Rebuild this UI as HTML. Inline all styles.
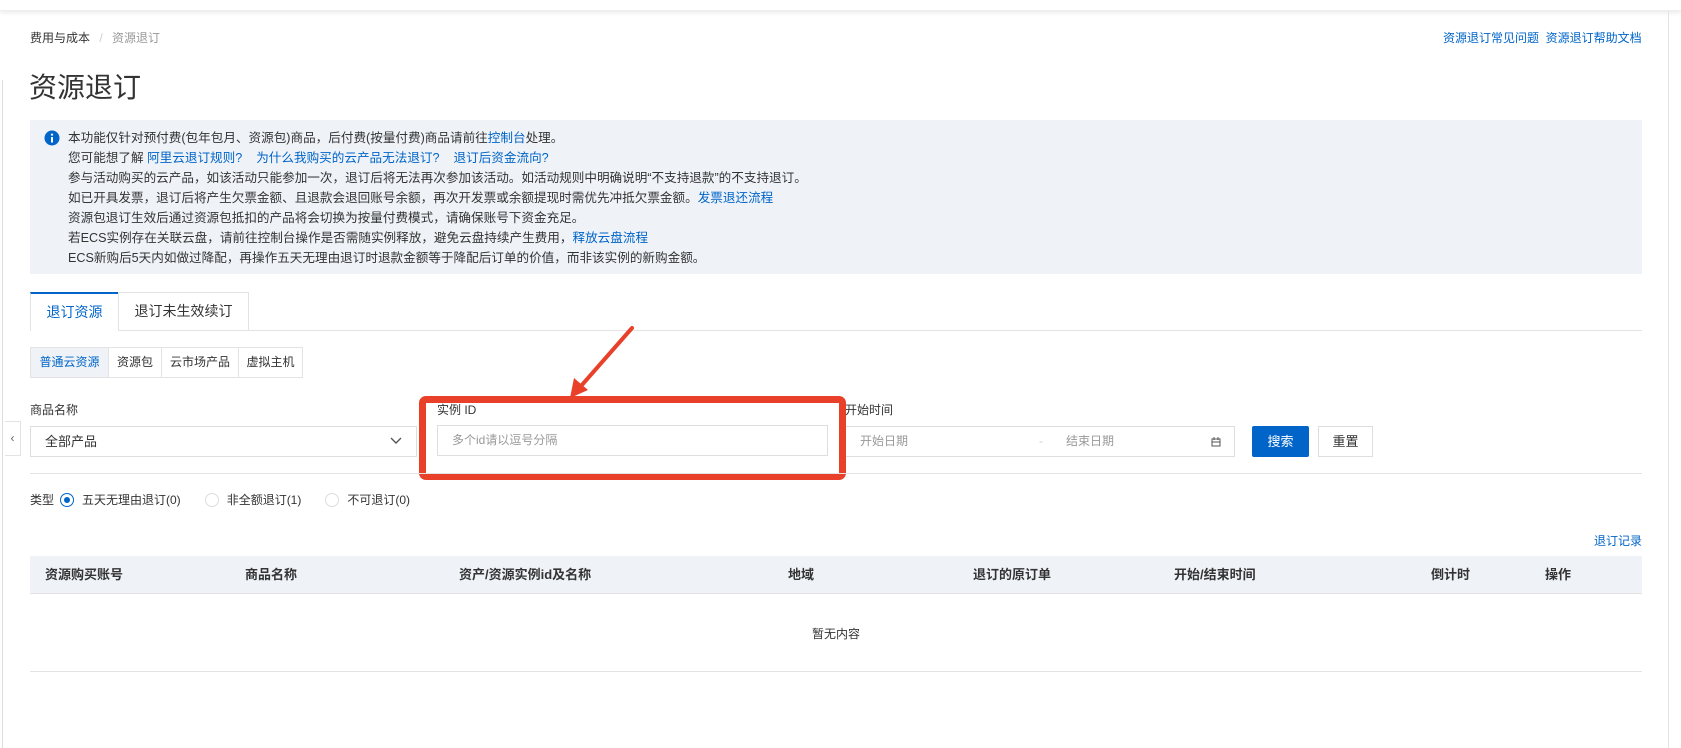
<!DOCTYPE html>
<html><head><meta charset="utf-8"><style>
*{box-sizing:border-box;margin:0;padding:0}
body{width:1681px;height:748px;overflow:hidden;background:#fff;font-family:"Liberation Sans","Noto Sans CJK SC",sans-serif;color:#333;font-size:13px;position:relative}
.a{position:absolute}
.blue{color:#0064c8}
.info div{height:20px;line-height:20px}
.inp{border:1px solid #dedede;background:#fff;height:31px;line-height:29px;padding-left:14px}
.th{position:absolute;top:0;line-height:38px;font-weight:bold;font-size:13px;color:#333}
</style></head><body>
<div class="a" style="left:0;top:0;width:1681px;height:11px;background:#fff;box-shadow:0 2px 4px rgba(0,0,0,.08);border-bottom:1px solid #eee"></div>
<div class="a" style="left:1668px;top:11px;width:1px;height:737px;background:#e3e3e3"></div>
<div class="a" style="left:2px;top:80px;width:1px;height:668px;background:#ddd"></div>
<div class="a" style="left:30px;top:29px;font-size:12px;color:#333">费用与成本 <span style="color:#ccc;margin:0 6px">/</span> <span style="color:#999">资源退订</span></div>
<div class="a blue" style="left:1443px;top:29px;font-size:12px">资源退订常见问题&nbsp;&nbsp;资源退订帮助文档</div>
<div class="a" style="left:29px;top:66px;font-size:28px;color:#333">资源退订</div>
<div class="a info" style="left:30px;top:120px;width:1612px;height:154px;background:#eff3f8;padding:8px 0 0 38px;font-size:12.6px;color:#333">
<svg class="a" style="left:14px;top:10px" width="16" height="16"><circle cx="8" cy="8" r="7.5" fill="#0064c8"/><rect x="7" y="7" width="2" height="5.5" fill="#fff"/><circle cx="8" cy="4.6" r="1.1" fill="#fff"/></svg>
<div>本功能仅针对预付费(包年包月、资源包)商品，后付费(按量付费)商品请前往<span class="blue">控制台</span>处理。</div>
<div>您可能想了解 <span class="blue">阿里云退订规则?&nbsp;&nbsp;&nbsp;&nbsp;为什么我购买的云产品无法退订?&nbsp;&nbsp;&nbsp;&nbsp;退订后资金流向?</span></div>
<div>参与活动购买的云产品，如该活动只能参加一次，退订后将无法再次参加该活动。如活动规则中明确说明“不支持退款”的不支持退订。</div>
<div>如已开具发票，退订后将产生欠票金额、且退款会退回账号余额，再次开发票或余额提现时需优先冲抵欠票金额。<span class="blue">发票退还流程</span></div>
<div>资源包退订生效后通过资源包抵扣的产品将会切换为按量付费模式，请确保账号下资金充足。</div>
<div>若ECS实例存在关联云盘，请前往控制台操作是否需随实例释放，避免云盘持续产生费用，<span class="blue">释放云盘流程</span></div>
<div>ECS新购后5天内如做过降配，再操作五天无理由退订时退款金额等于降配后订单的价值，而非该实例的新购金额。</div>
</div>
<div class="a" style="left:30px;top:330px;width:1612px;height:1px;background:#e3e3e3"></div>
<div class="a blue" style="left:30px;top:292px;width:88px;height:39px;background:#fff;border-top:2px solid #0064c8;border-left:1px solid #e3e3e3;text-align:center;line-height:36px;font-size:14px">退订资源</div>
<div class="a" style="left:118px;top:292px;width:131px;height:38px;border:1px solid #e3e3e3;border-bottom:none;text-align:center;line-height:37px;font-size:14px">退订未生效续订</div>
<div class="a" style="left:30px;top:347px;height:31px;border:1px solid #e3e3e3;display:flex;font-size:12px;line-height:29px">
<div class="blue" style="width:77px;text-align:center;background:#eff3f8">普通云资源</div>
<div style="width:53px;text-align:center;border-left:1px solid #e3e3e3">资源包</div>
<div style="width:77px;text-align:center;border-left:1px solid #e3e3e3">云市场产品</div>
<div style="width:64px;text-align:center;border-left:1px solid #e3e3e3">虚拟主机</div></div>
<div class="a" style="left:30px;top:401px;font-size:12px">商品名称</div>
<div class="a" style="left:437px;top:401px;font-size:12px">实例 ID</div>
<div class="a" style="left:845px;top:401px;font-size:12px">开始时间</div>
<div class="a" style="left:5px;top:421px;width:16px;height:35px;border:1px solid #e3e3e3;border-left:none;color:#666;line-height:33px;font-size:12px;text-align:center">‹</div>
<div class="a inp" style="left:30px;top:426px;width:387px;font-size:13px;color:#333">全部产品<svg class="a" style="right:14px;top:10px" width="12" height="8"><path d="M1 1l5 5 5-5" stroke="#555" stroke-width="1.4" fill="none"/></svg></div>
<div class="a inp" style="left:437px;top:425px;width:391px;color:#999;font-size:12px">多个id请以逗号分隔</div>
<div class="a inp" style="left:845px;top:426px;width:390px;color:#999;font-size:12px">开始日期<span class="a" style="left:193px;color:#ccc">-</span><span class="a" style="left:220px">结束日期</span><svg class="a" style="left:365px;top:10px" width="10" height="10"><rect x="1" y="2" width="8" height="7" stroke="#555" fill="none"/><path d="M1 5h8M3 0v3M7 0v3" stroke="#555"/></svg></div>
<div class="a" style="left:1252px;top:426px;width:57px;height:31px;background:#0064c8;color:#fff;text-align:center;line-height:31px;font-size:13px;border-radius:2px">搜索</div>
<div class="a" style="left:1318px;top:426px;width:55px;height:31px;border:1px solid #dedede;text-align:center;line-height:29px;font-size:13px">重置</div>
<div class="a" style="left:419px;top:396px;width:427px;height:84px;border:7px solid #e84029;border-radius:7px"></div>
<svg class="a" style="left:560px;top:320px" width="80" height="90"><path d="M72 8L14 74" stroke="#e84029" stroke-width="4" stroke-linecap="round"/><path d="M10 78l4-20 14 12z" fill="#e84029"/></svg>
<div class="a" style="left:30px;top:473px;width:1612px;height:1px;background:#e3e3e3"></div>
<div class="a" style="left:30px;top:492px;font-size:12px;display:flex;align-items:center;line-height:16px">类型
<span style="width:14px;height:14px;border:1px solid #0064c8;border-radius:50%;margin:0 8px 0 6px;display:inline-block;position:relative"><span style="position:absolute;left:3px;top:3px;width:6px;height:6px;border-radius:50%;background:#0064c8"></span></span>五天无理由退订(0)
<span style="width:14px;height:14px;border:1px solid #ddd;border-radius:50%;margin:0 8px 0 24px;display:inline-block"></span>非全额退订(1)
<span style="width:14px;height:14px;border:1px solid #ddd;border-radius:50%;margin:0 8px 0 24px;display:inline-block"></span>不可退订(0)</div>
<div class="a blue" style="left:1594px;top:532px;font-size:12px">退订记录</div>
<div class="a" style="left:30px;top:556px;width:1612px;height:38px;background:#eff3f8;border-bottom:1px solid #e3e3e3">
<span class="th" style="left:15px">资源购买账号</span><span class="th" style="left:215px">商品名称</span><span class="th" style="left:429px">资产/资源实例id及名称</span><span class="th" style="left:758px">地域</span><span class="th" style="left:943px">退订的原订单</span><span class="th" style="left:1144px">开始/结束时间</span><span class="th" style="left:1401px">倒计时</span><span class="th" style="left:1515px">操作</span></div>
<div class="a" style="left:812px;top:625px;font-size:12px">暂无内容</div>
<div class="a" style="left:30px;top:671px;width:1612px;height:1px;background:#e3e3e3"></div>
</body></html>
